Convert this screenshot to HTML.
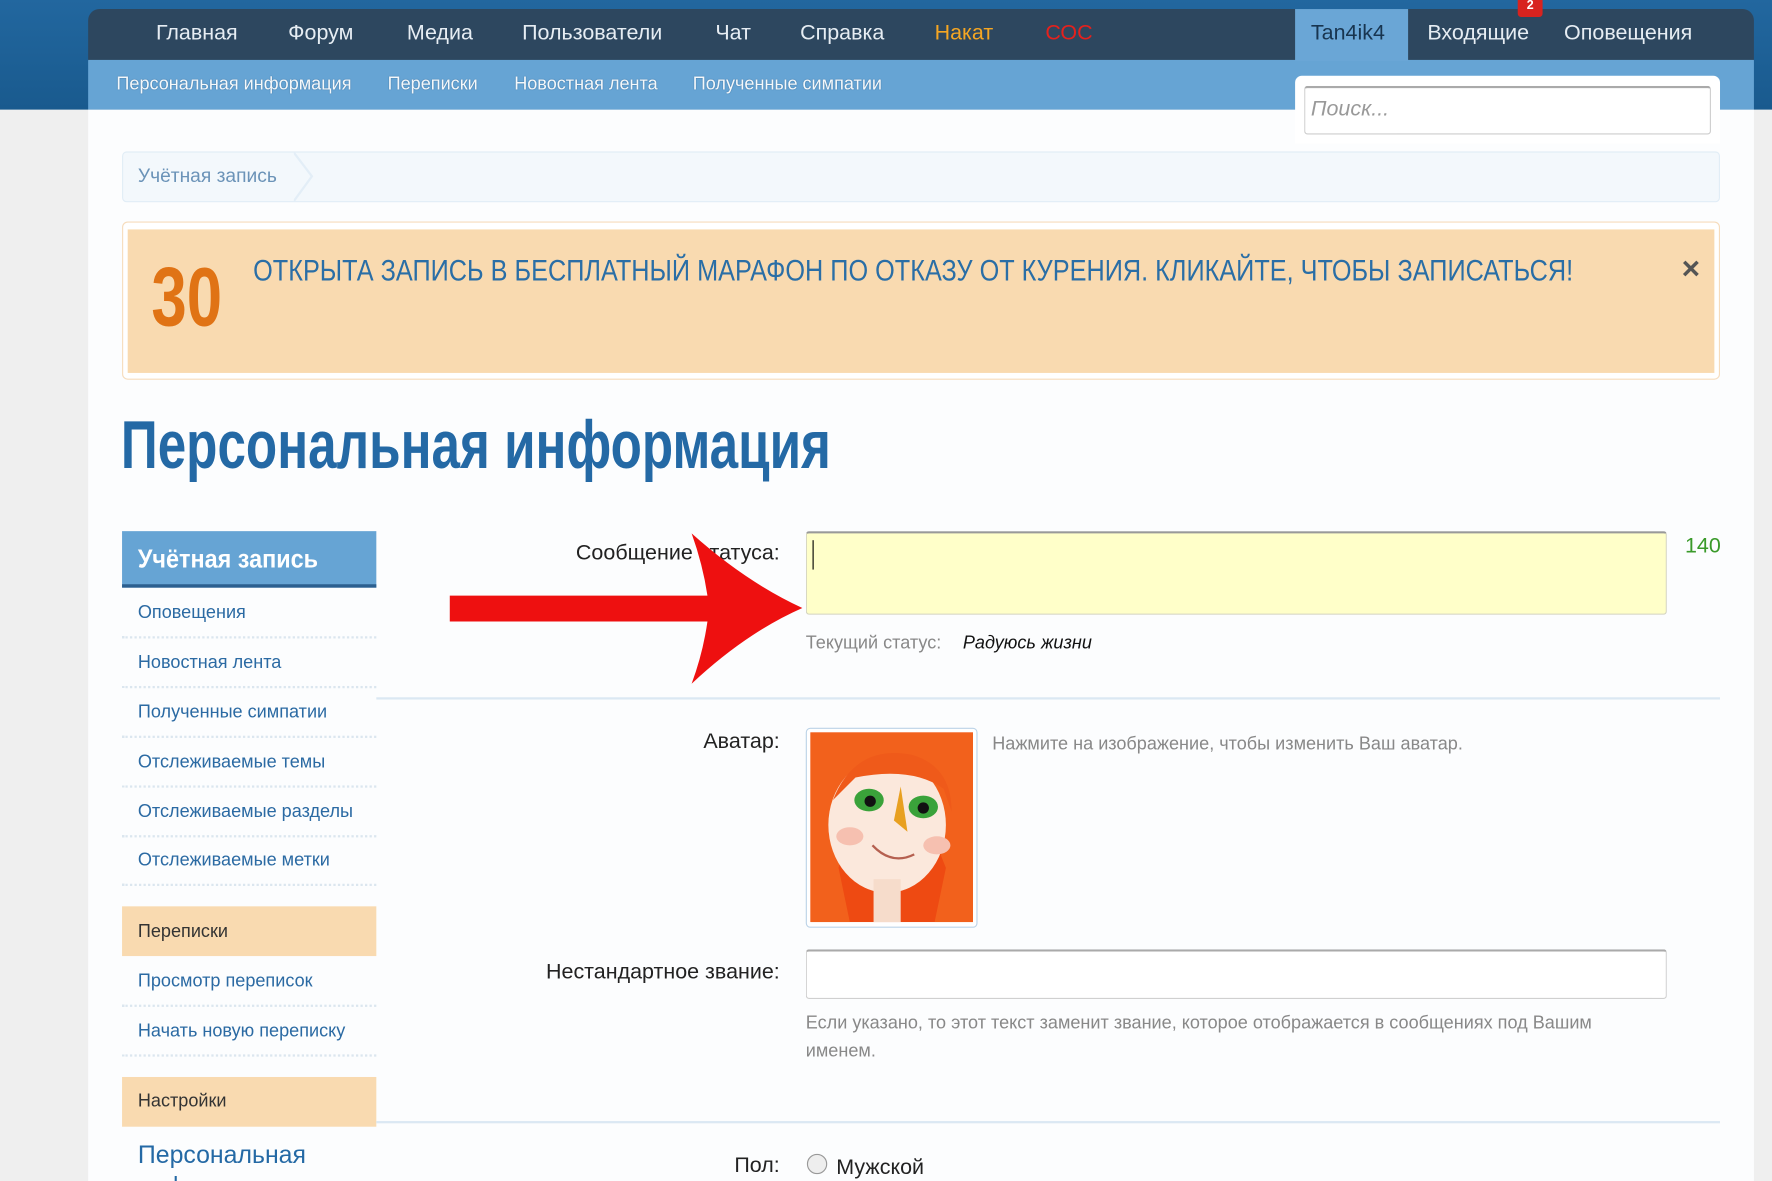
<!DOCTYPE html>
<html><head><meta charset="utf-8"><style>
html,body{margin:0;padding:0;width:1772px;height:1181px;overflow:hidden;background:#efefef;}
#w{position:absolute;left:0;top:0;width:1568px;height:1045px;overflow:hidden;transform:scale(1.1301);transform-origin:0 0;font-family:"Liberation Sans",sans-serif;}
.a{position:absolute;white-space:nowrap;}
.nav{font-size:19px;color:#e6edf3;top:19px;}
.sub{font-size:16px;color:#f4f8fb;top:66px;text-shadow:0 0 1px #2a5a85;}
.side{font-size:16px;color:#2b6aa3;left:122px;}
.sep{position:absolute;left:108px;width:225px;border-top:2px dotted #dbe6ef;}
.lab{font-size:19px;color:#222;right:878px;text-align:right;}
</style></head><body><div id="w">
<div class="a" style="left:0;top:0;width:1568px;height:97px;background:linear-gradient(#22679f,#195a8e);"></div>
<div class="a" style="left:78px;top:97px;width:1474px;height:948px;background:#fcfdfe;"></div>
<div class="a" style="left:78px;top:8px;width:1474px;height:45px;background:#2d475f;border-radius:10px 10px 0 0;border-bottom:1px solid #1c3045;"></div>
<div class="a" style="left:78px;top:53px;width:1474px;height:44px;background:#66a4d4;"></div>
<div class="a nav" style="left:138px">Главная</div>
<div class="a nav" style="left:255px">Форум</div>
<div class="a nav" style="left:360px">Медиа</div>
<div class="a nav" style="left:462px">Пользователи</div>
<div class="a nav" style="left:633px">Чат</div>
<div class="a nav" style="left:708px">Справка</div>
<div class="a nav" style="left:827px;color:#f5a623">Накат</div>
<div class="a nav" style="left:925px;color:#e4211d">СОС</div>
<div class="a" style="left:1146px;top:8px;width:100px;height:46px;background:#6aa6d6;"></div>
<div class="a nav" style="left:1160px;color:#183550">Tan4ik4</div>
<div class="a nav" style="left:1263px">Входящие</div>
<div class="a nav" style="left:1384px">Оповещения</div>
<div class="a" style="left:1343px;top:0;width:22px;height:15px;background:#d8231f;color:#fff;font-size:11px;font-weight:bold;text-align:center;line-height:10px;border-radius:0 0 3px 3px;">2</div>
<div class="a sub" style="left:103px">Персональная информация</div>
<div class="a sub" style="left:343px">Переписки</div>
<div class="a sub" style="left:455px">Новостная лента</div>
<div class="a sub" style="left:613px">Полученные симпатии</div>
<div class="a" style="left:1146px;top:67px;width:376px;height:60px;background:#fff;border-radius:6px 6px 0 0;"></div>
<div class="a" style="left:1154px;top:76px;width:358px;height:40px;background:#fff;border:1px solid #ccc;border-top:2px solid #aaa;border-radius:3px;"></div>
<div class="a" style="left:1160px;top:86px;font-size:19px;font-style:italic;color:#999;">Поиск...</div>
<div class="a" style="left:108px;top:134px;width:1412px;height:43px;background:#f3f8fc;border:1px solid #e1edf6;border-radius:4px;"></div>
<svg class="a" style="left:260px;top:135px" width="20" height="43"><path d="M0 0 L16 21 L0 43" fill="none" stroke="#e3eef7" stroke-width="2"/></svg>
<div class="a" style="left:122px;top:146px;font-size:17px;color:#6b93b8;">Учётная запись</div>
<div class="a" style="left:108px;top:196px;width:1412px;height:138px;border:1px solid #f6dcbc;border-radius:5px;background:#fff;"></div>
<div class="a" style="left:113px;top:203px;width:1404px;height:127px;background:#f9dab0;"></div>
<div class="a" style="left:134px;top:220px;font-size:74px;font-weight:bold;color:#e07315;transform:scaleX(0.76);transform-origin:0 0;">30</div>
<div class="a" style="left:224px;top:224px;font-size:26px;color:#2a6ea6;transform:scaleX(0.86);transform-origin:0 0;">ОТКРЫТА ЗАПИСЬ В БЕСПЛАТНЫЙ МАРАФОН ПО ОТКАЗУ ОТ КУРЕНИЯ. КЛИКАЙТЕ, ЧТОБЫ ЗАПИСАТЬСЯ!</div>
<div class="a" style="left:1488px;top:222px;font-size:28px;color:#555;font-weight:bold;">×</div>
<div class="a" style="left:107px;top:359px;font-size:60px;font-weight:bold;color:#2469a5;transform:scaleX(0.755);transform-origin:0 0;">Персональная информация</div>
<div class="a" style="left:108px;top:470px;width:225px;height:47px;background:#66a4d4;border-bottom:3px solid #2b5f8f;"></div>
<div class="a" style="left:122px;top:481px;font-size:23px;font-weight:bold;color:#fff;transform:scaleX(0.9);transform-origin:0 0;">Учётная запись</div>
<div class="a side" style="top:534px">Оповещения</div><div class="sep" style="top:563px"></div>
<div class="a side" style="top:578px">Новостная лента</div><div class="sep" style="top:607px"></div>
<div class="a side" style="top:622px">Полученные симпатии</div><div class="sep" style="top:651px"></div>
<div class="a side" style="top:666px">Отслеживаемые темы</div><div class="sep" style="top:695px"></div>
<div class="a side" style="top:710px">Отслеживаемые разделы</div><div class="sep" style="top:739px"></div>
<div class="a side" style="top:753px">Отслеживаемые метки</div><div class="sep" style="top:782px"></div>
<div class="a" style="left:108px;top:802px;width:225px;height:44px;background:#f9dab0;"></div>
<div class="a side" style="top:816px;color:#333">Переписки</div>
<div class="a side" style="top:860px">Просмотр переписок</div><div class="sep" style="top:889px"></div>
<div class="a side" style="top:904px">Начать новую переписку</div><div class="sep" style="top:933px"></div>
<div class="a" style="left:108px;top:953px;width:225px;height:44px;background:#f9dab0;"></div>
<div class="a side" style="top:966px;color:#333">Настройки</div>
<div class="a side" style="top:1008px;font-size:22px;color:#2469a5;line-height:28px;">Персональная<br>информация</div>
<div class="a lab" style="top:479px">Сообщение статуса:</div>
<div class="a" style="left:713px;top:470px;width:760px;height:71px;background:#ffffc9;border:1px solid #d4d4c0;border-top:2px solid #999;border-radius:3px;"></div>
<div class="a" style="left:719px;top:478px;width:1px;height:26px;background:#000;"></div>
<div class="a" style="left:1491px;top:473px;font-size:19px;color:#3a9a2a;">140</div>
<div class="a" style="left:713px;top:561px;font-size:16px;color:#888;">Текущий статус:</div>
<div class="a" style="left:852px;top:561px;font-size:16px;color:#111;font-style:italic;">Радуюсь жизни</div>
<div class="a" style="left:333px;top:617px;width:1189px;height:2px;background:#dbe8f3;"></div>
<div class="a lab" style="top:646px">Аватар:</div>
<div class="a" style="left:713px;top:644px;width:150px;height:175px;border:1px solid #bcd3e8;border-radius:4px;background:#fff;"></div>
<svg class="a" style="left:717px;top:648px" width="144" height="168" viewBox="0 0 144 168">
<rect width="144" height="168" fill="#ee4a12"/>
<path d="M0 0H144V168H110L120 120L100 70L40 70L25 120L35 168H0Z" fill="#f2611c"/>
<ellipse cx="68" cy="82" rx="52" ry="60" fill="#fbe8dc"/>
<path d="M20 60Q40 10 90 20Q125 30 125 70L118 50Q90 30 40 40Z" fill="#ef5a1a"/>
<rect x="56" y="130" width="24" height="38" fill="#f6dccb"/>
<ellipse cx="52" cy="60" rx="13" ry="10" fill="#3aa23a"/><circle cx="53" cy="61" r="5" fill="#111"/>
<ellipse cx="100" cy="66" rx="13" ry="10" fill="#3aa23a"/><circle cx="100" cy="67" r="5" fill="#111"/>
<path d="M80 48L74 78L86 88Z" fill="#e8a020"/>
<ellipse cx="35" cy="92" rx="12" ry="8" fill="#f6c0b0"/><ellipse cx="112" cy="100" rx="12" ry="8" fill="#f6c0b0"/>
<path d="M55 100Q72 118 92 108" fill="none" stroke="#b56050" stroke-width="2"/>
</svg>
<div class="a" style="left:878px;top:650px;font-size:16px;color:#888;">Нажмите на изображение, чтобы изменить Ваш аватар.</div>
<div class="a lab" style="top:850px">Нестандартное звание:</div>
<div class="a" style="left:713px;top:840px;width:760px;height:41px;background:#fff;border:1px solid #d0d0d0;border-top:2px solid #aaa;border-radius:3px;"></div>
<div class="a" style="left:713px;top:893px;font-size:16px;color:#888;line-height:25px;">Если указано, то этот текст заменит звание, которое отображается в сообщениях под Вашим<br>именем.</div>
<div class="a" style="left:333px;top:992px;width:1189px;height:2px;background:#dbe8f3;"></div>
<div class="a lab" style="top:1021px">Пол:</div>
<div class="a" style="left:714px;top:1021px;width:16px;height:16px;border:1px solid #999;border-radius:50%;background:#eee;"></div>
<div class="a" style="left:740px;top:1023px;font-size:19px;color:#222;">Мужской</div>
<svg class="a" style="left:0;top:0" width="1568" height="1045"><path d="M398 527L626 527Q622 500 612 472Q660 515 710 538Q660 560 612 605Q622 578 626 550L398 550Z" fill="#ee1010"/></svg>
</div></body></html>
